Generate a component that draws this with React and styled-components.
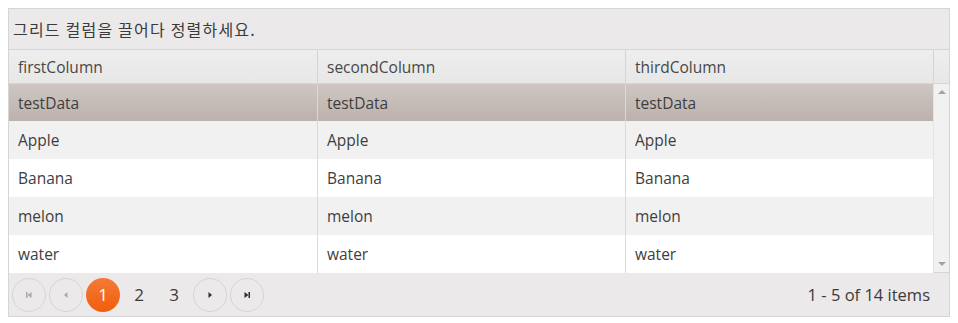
import styled, { createGlobalStyle } from "styled-components";

const GlobalStyle = createGlobalStyle`
  body {
    margin: 8px;
    font-family: "Open Sans", "Noto Sans CJK KR", sans-serif;
    background: #fff;
  }
`;

const columns = ["firstColumn", "secondColumn", "thirdColumn"];
const rows = ["testData", "Apple", "Banana", "melon", "water"];

const Grid = styled.div`
  width: 940px;
  border: 1px solid #d5d5d5;
  font-size: 15.5px;
  color: #3e3e3e;
`;

const GroupHeader = styled.div`
  height: 40px;
  display: flex;
  align-items: center;
  padding-left: 4px;
  background: #ebe9ea;
  border-bottom: 1px solid #d5d5d5;
  font-family: "Noto Sans CJK KR", sans-serif;
  font-size: 16px;
  letter-spacing: 1.2px;
  color: #3a3a3a;
`;

const HeaderRow = styled.div`
  display: grid;
  grid-template-columns: 308px 308px 308px 16px;
  height: 33px;
  background: linear-gradient(#efeeee, #e8e7e7);
  border-bottom: 1px solid #d5d5d5;
`;

const HeaderCell = styled.div`
  display: flex;
  align-items: center;
  padding-left: 9px;
  border-left: ${(p) => (p.$first ? "none" : "1px solid #d5d5d5")};
  color: #474747;
`;

const Body = styled.div`
  display: flex;
  height: 188px;
`;

const Rows = styled.div`
  flex: 1;
`;

const Row = styled.div`
  display: grid;
  grid-template-columns: 308px 308px 308px;
  height: ${(p) => (p.$selected ? "37px" : "38px")};
  background: ${(p) =>
    p.$selected
      ? "linear-gradient(#cec6c2, #bcb2ad)"
      : p.$alt
      ? "#f1f1f1"
      : "#fff"};
`;

const Cell = styled.div`
  display: flex;
  align-items: center;
  padding-left: 9px;
  border-left: ${(p) => (p.$first ? "none" : "1px solid #d9d9d9")};
  color: #3e3e3e;
`;

const Scrollbar = styled.div`
  width: 16px;
  background: #f1f1f1;
  border-left: 1px solid #e4e4e4;
  display: flex;
  flex-direction: column;
  justify-content: space-between;
  align-items: center;
  padding: 6px 0;
`;

const Arrow = styled.div`
  width: 0;
  height: 0;
  border-left: 4px solid transparent;
  border-right: 4px solid transparent;
  ${(p) =>
    p.$up
      ? "border-bottom: 4px solid #a3a3a3;"
      : "border-top: 4px solid #a3a3a3;"}
`;

const Pager = styled.div`
  height: 43px;
  display: flex;
  align-items: center;
  padding: 0 19px 0 3px;
  background: #ebe9ea;
  border-top: 1px solid #d5d5d5;
`;

const Pages = styled.div`
  display: flex;
  align-items: center;
  gap: 3px;
`;

const NavButton = styled.div`
  width: 32px;
  height: 32px;
  border-radius: 50%;
  border: 1px solid #d6d4d4;
  display: flex;
  align-items: center;
  justify-content: center;
  color: ${(p) => (p.$disabled ? "#a9a9a9" : "#2e2e2e")};
  svg {
    width: 10px;
    height: 10px;
    fill: currentColor;
  }
`;

const PageNumber = styled.div`
  width: ${(p) => (p.$active ? "34px" : "32px")};
  height: 34px;
  border-radius: 50%;
  display: flex;
  align-items: center;
  justify-content: center;
  font-size: 17px;
  color: ${(p) => (p.$active ? "#fff" : "#3a3a3a")};
  background: ${(p) =>
    p.$active ? "linear-gradient(#f47a36, #f15d0c)" : "transparent"};
`;

const Info = styled.div`
  margin-left: auto;
  font-size: 16.5px;
  color: #3a3a3a;
`;

const First = () => (
  <svg viewBox="0 0 10 10">
    <rect x="2" y="2" width="1.5" height="6" />
    <polygon points="7.5,2 7.5,8 3.6,5" />
  </svg>
);
const Prev = () => (
  <svg viewBox="0 0 10 10">
    <polygon points="6.5,2 6.5,8 3,5" />
  </svg>
);
const Next = () => (
  <svg viewBox="0 0 10 10">
    <polygon points="3.5,2 3.5,8 7,5" />
  </svg>
);
const Last = () => (
  <svg viewBox="0 0 10 10">
    <polygon points="2.5,2 2.5,8 6.4,5" />
    <rect x="6.5" y="2" width="1.5" height="6" />
  </svg>
);

const App = () => {
  return (
    <>
      <GlobalStyle />
      <Grid>
        <GroupHeader>그리드 컬럼을 끌어다 정렬하세요.</GroupHeader>
        <HeaderRow>
          {columns.map((c, i) => (
            <HeaderCell key={c} $first={i === 0}>
              {c}
            </HeaderCell>
          ))}
          <HeaderCell />
        </HeaderRow>
        <Body>
          <Rows>
            {rows.map((r, i) => (
              <Row key={r} $selected={i === 0} $alt={i % 2 === 1}>
                {columns.map((c, j) => (
                  <Cell key={c} $first={j === 0}>
                    {r}
                  </Cell>
                ))}
              </Row>
            ))}
          </Rows>
          <Scrollbar>
            <Arrow $up />
            <Arrow />
          </Scrollbar>
        </Body>
        <Pager>
          <Pages>
            <NavButton $disabled>
              <First />
            </NavButton>
            <NavButton $disabled>
              <Prev />
            </NavButton>
            <PageNumber $active>1</PageNumber>
            <PageNumber>2</PageNumber>
            <PageNumber>3</PageNumber>
            <NavButton>
              <Next />
            </NavButton>
            <NavButton>
              <Last />
            </NavButton>
          </Pages>
          <Info>1 - 5 of 14 items</Info>
        </Pager>
      </Grid>
    </>
  );
};

export default App;
